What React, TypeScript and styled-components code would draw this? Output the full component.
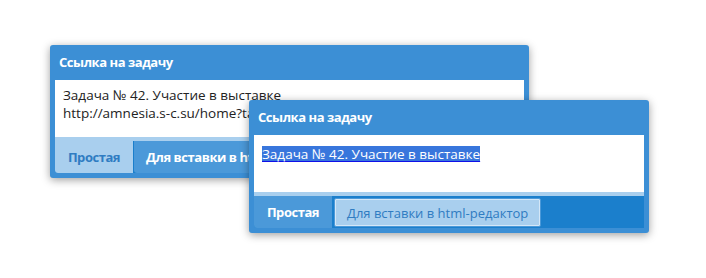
import React from 'react'
import styled, { createGlobalStyle } from 'styled-components'

const GlobalStyle = createGlobalStyle`
  html, body {
    margin: 0;
    padding: 0;
    background: #ffffff;
  }
  body {
    font-family: 'Open Sans', 'Noto Sans', sans-serif;
  }
`

const Stage = styled.div`
  position: relative;
  width: 706px;
  height: 278px;
  padding: 45px 0 0 50px;
  box-sizing: border-box;
`

const Panel = styled.div<{ $width: number }>`
  width: ${(p) => p.$width}px;
  box-sizing: border-box;
  background: #3c8fd5;
  border-radius: 3px;
  padding: 0 5px 5px 5px;
  box-shadow: 0 2px 9px rgba(0, 0, 0, 0.38);
  display: flex;
  flex-direction: column;
`

// the second dialog lies over the first one
const Overlay = styled(Panel)`
  position: absolute;
  left: 249px;
  top: 100px;
`

const Title = styled.div`
  height: 35px;
  line-height: 35px;
  padding: 0 4px;
  color: #ffffff;
  font-size: 13px;
  font-weight: 700;
  letter-spacing: -0.45px;
  white-space: nowrap;
`

const TextBox = styled.div`
  height: 57px;
  box-sizing: border-box;
  background: #ffffff;
  padding: 6px 8px;
  color: #222222;
  font-size: 13.5px;
  line-height: 18px;
  white-space: nowrap;
  overflow: hidden;
`

const Selected = styled.span`
  display: inline-block;
  margin-top: 5px;
  background: #3876dc;
  color: #ffffff;
  text-decoration: underline;
  text-decoration-color: #1010e8;
  text-underline-offset: 2px;
  line-height: 16px;
`

const TabBar = styled.div`
  display: flex;
  height: 32px;
  border-top: 4px solid #a9cfee;
  background: #1b7fcc;
  border-bottom-left-radius: 3px;
`

const Tab = styled.div<{ $tone: 'light' | 'medium'; $boxed?: boolean; $grow?: boolean }>`
  display: flex;
  align-items: center;
  box-sizing: border-box;
  min-width: 78px;
  padding: 0 12px;
  margin-right: 1px;
  white-space: nowrap;
  font-size: 13px;
  flex: ${(p) => (p.$grow ? '1 0 auto' : '0 0 auto')};
  justify-content: ${(p) => (p.$grow ? 'flex-start' : 'center')};
  background: ${(p) => (p.$tone === 'light' ? '#a9cfee' : '#4b99d9')};
  color: ${(p) => (p.$tone === 'light' ? '#2f7cc2' : '#ffffff')};
  font-weight: ${(p) => (p.$boxed ? 400 : 700)};
  letter-spacing: ${(p) => (p.$boxed ? '0' : '-0.45px')};
  border: ${(p) => (p.$boxed ? '1px solid #4b99d9' : 'none')};
  box-shadow: ${(p) => (p.$boxed ? 'inset 0 0 0 1px #d4e7f7' : 'none')};
  margin-top: ${(p) => (p.$boxed ? '2px' : '0')};
  margin-left: ${(p) => (p.$boxed ? '1px' : '0')};
  height: ${(p) => (p.$boxed ? '29px' : 'auto')};
  border-radius: ${(p) => (p.$boxed ? '2px' : '0 0 0 3px')};
`

const PlainTab = styled(Tab)`
  margin-top: -4px;
  padding-top: 4px;
`

export default function App() {
  return (
    <>
      <GlobalStyle />
      <Stage>
        <Panel $width={479}>
          <Title>Ссылка на задачу</Title>
          <TextBox>
            Задача № 42. Участие в выставке
            <br />
            http://amnesia.s-c.su/home?task=42
          </TextBox>
          <TabBar>
            <PlainTab $tone="light">Простая</PlainTab>
            <Tab $tone="medium" $grow>
              Для вставки в html-редактор
            </Tab>
          </TabBar>
        </Panel>

        <Overlay $width={400}>
          <Title>Ссылка на задачу</Title>
          <TextBox>
            <Selected>Задача № 42. Участие в выставке</Selected>
          </TextBox>
          <TabBar>
            <Tab $tone="medium">Простая</Tab>
            <Tab $tone="light" $boxed>
              Для вставки в html-редактор
            </Tab>
          </TabBar>
        </Overlay>
      </Stage>
    </>
  )
}
